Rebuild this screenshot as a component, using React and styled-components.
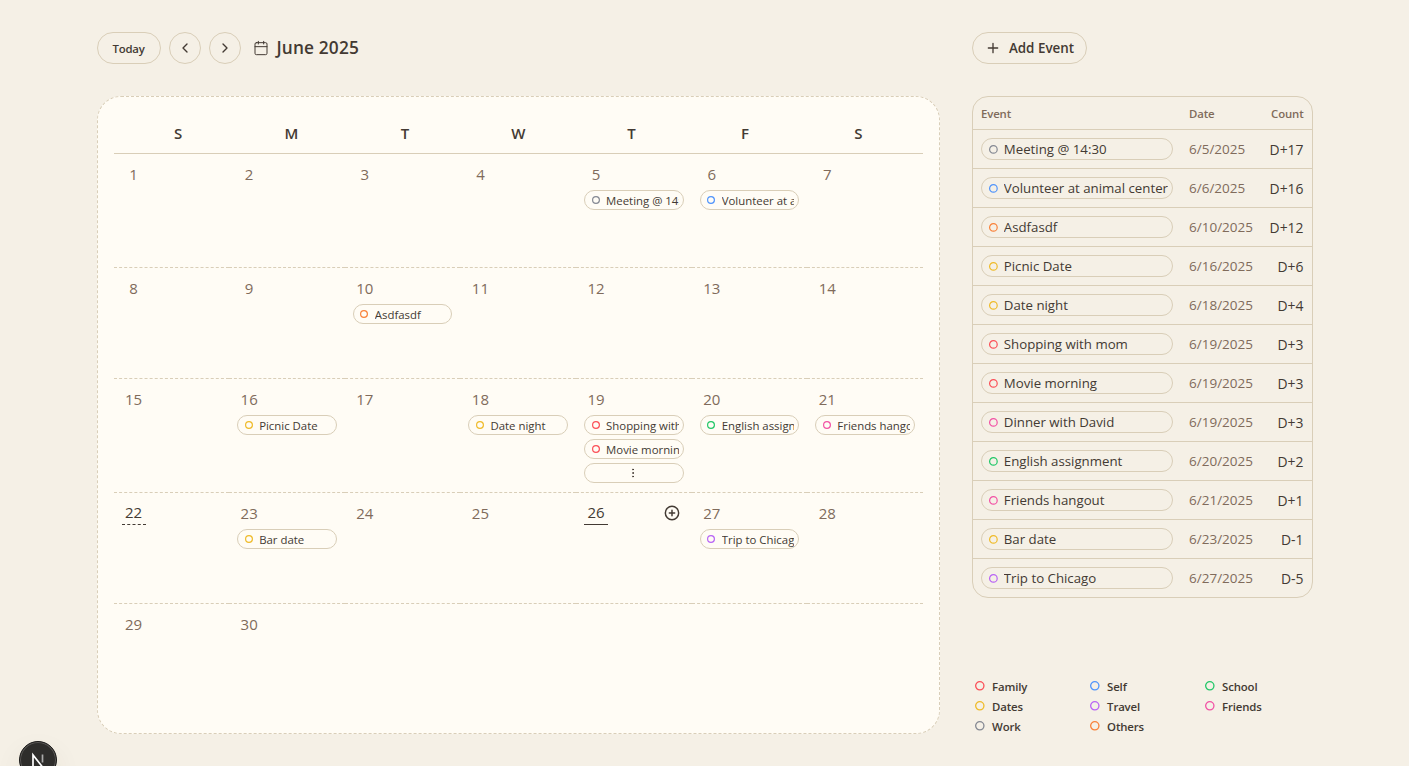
import React from "react";
import styled, { createGlobalStyle, css } from "styled-components";

const C = {
  page: "#f5f0e6",
  card: "#fffcf5",
  line: "#d9ceb8",
  ink: "#433a33",
  muted: "#806b5b",
};

const CATEGORY = {
  family: "#fb5058",
  self: "#5094fb",
  school: "#22c768",
  dates: "#efbb2a",
  travel: "#b863f5",
  friends: "#f252a5",
  work: "#858993",
  others: "#f9823a",
};

const Global = createGlobalStyle`
  *, *::before, *::after { box-sizing: border-box; }
  html, body { margin: 0; height: 766px; overflow: hidden; background: ${C.page}; }
  body { font-family: "Open Sans", "Noto Sans", sans-serif; color: ${C.ink}; }
  button { font: inherit; color: inherit; background: none; padding: 0; margin: 0; border: 0; }
`;

const Page = styled.main`
  width: 1216px;
  height: 766px;
  margin: 0 auto;
  padding-top: 32px;
  display: flex;
  gap: 32px;
`;

const MainColumn = styled.section`
  width: 843.5px;
  display: flex;
  flex-direction: column;
  gap: 32px;
`;

const SideColumn = styled.aside`
  width: 340.5px;
  height: 704px;
  display: flex;
  flex-direction: column;
`;

const Toolbar = styled.header`
  height: 32px;
  flex: none;
  display: flex;
  align-items: center;
  gap: 8px;
`;

const SideToolbar = styled(Toolbar)`
  margin-bottom: 32px;
`;

const OutlineButton = styled.button`
  height: 32px;
  width: ${(p) => p.$width}px;
  display: flex;
  align-items: center;
  justify-content: center;
  gap: 8px;
  border: 1px solid ${C.line};
  border-radius: 16px;
  font-size: ${(p) => p.$size || 12}px;
  letter-spacing: ${(p) => p.$spacing || 0}px;
  font-weight: 600;
  white-space: nowrap;
`;

const Title = styled.h1`
  margin: 0 0 0 4px;
  display: flex;
  align-items: center;
  gap: 8px;
  font-size: 17.3px;
  line-height: 28px;
  font-weight: 600;
  letter-spacing: 0.15px;
`;

const Calendar = styled.div`
  height: 638px;
  padding: 15px 16px 16px;
  display: flex;
  flex-direction: column;
  background: ${C.card};
  border: 1px dashed ${C.line};
  border-radius: 24px;
`;

const WeekHeader = styled.div`
  height: 42px;
  flex: none;
  padding: 0 8px;
  display: grid;
  grid-template-columns: repeat(7, 1fr);
  align-items: center;
  text-align: center;
  border-bottom: 1px solid ${C.line};
  font-size: 15px;
  line-height: 40px;
  font-weight: 600;
`;

const Grid = styled.div`
  flex: 1;
  display: grid;
  grid-template-columns: repeat(7, minmax(0, 1fr));
  grid-template-rows: 114px 111px 114px 111px 1fr;
`;

const Cell = styled.div`
  padding: 8px 8px 0;
  display: flex;
  flex-direction: column;
  gap: 4px;
  border-bottom: ${(p) => (p.$last ? "0" : `1px dashed ${C.line}`)};
`;

const CellTop = styled.div`
  height: 24px;
  display: flex;
  justify-content: space-between;
  align-items: flex-start;
`;

const DayNumber = styled.span`
  width: 24px;
  height: 24px;
  line-height: 25px;
  text-align: center;
  font-size: 15px;
  color: ${C.muted};
  ${(p) =>
    p.$mark &&
    css`
      color: ${C.ink};
      line-height: 23px;
      border-bottom: 1px ${p.$mark} ${C.ink};
    `}
`;

const AddMark = styled.span`
  height: 24px;
  padding-right: 4px;
  display: flex;
  align-items: center;
`;

const Pill = styled.div`
  height: ${(p) => (p.$large ? 22 : 20)}px;
  padding: 0 4px 0 5.5px;
  display: flex;
  align-items: center;
  gap: 5.5px;
  border: 1px solid ${C.line};
  border-radius: 11px;
`;

const MorePill = styled(Pill)`
  padding: 0 1px 0 0;
  justify-content: center;
`;

const PillText = styled.span`
  flex: 1;
  min-width: 0;
  overflow: hidden;
  white-space: nowrap;
  font-size: ${(p) => (p.$large ? 13.25 : 11.4)}px;
  line-height: 18px;
  padding-top: ${(p) => (p.$large ? 0 : 1)}px;
`;

const Table = styled.div`
  border: 1px solid ${C.line};
  border-radius: 16px;
`;

const Row = styled.div`
  height: 39px;
  padding: 0 8px;
  display: grid;
  grid-template-columns: 192px 1fr auto;
  column-gap: 16px;
  align-items: center;
  border-bottom: 1px solid ${C.line};
  font-size: 13.9px;
  &:last-child { height: 38px; border-bottom: 0; }
`;

const HeadRow = styled(Row)`
  height: 33px;
  font-size: 11.4px;
  font-weight: 600;
  letter-spacing: -0.15px;
  color: ${C.muted};
`;

const DateText = styled.span`
  font-size: 13.5px;
  color: ${C.muted};
`;

const Legend = styled.div`
  margin-top: auto;
  padding-left: 2px;
  display: grid;
  grid-template-columns: repeat(3, 115px);
  grid-auto-rows: 20px;
  font-size: 11.4px;
  font-weight: 600;
  letter-spacing: -0.15px;
`;

const LegendItem = styled.div`
  display: flex;
  align-items: center;
  gap: 6.5px;
`;

const DevBadge = styled.div`
  position: fixed;
  left: 19px;
  top: 741px;
  width: 38px;
  height: 38px;
  display: flex;
  align-items: center;
  justify-content: center;
  border-radius: 50%;
  background: #2e2d2b;
  border: 1px solid #1b1a19;
  box-shadow: inset 0 0 0 1px #5a5856, 0 12px 28px rgba(80, 70, 40, 0.08);
`;

const RingSvg = styled.svg`
  flex: none;
`;

const Ring = ({ color, size, stroke = 1.2 }) => (
  <RingSvg width={size + 2} height={size + 2} viewBox={`0 0 ${size + 2} ${size + 2}`}>
    <circle cx={size / 2 + 1} cy={size / 2 + 1} r={(size - stroke) / 2} fill="none" stroke={color} strokeWidth={stroke} />
  </RingSvg>
);

const Icon = ({ size, width = 2, children }) => (
  <svg width={size} height={size} viewBox="0 0 24 24" fill="none" stroke={C.ink} strokeWidth={width} strokeLinecap="round" strokeLinejoin="round">
    {children}
  </svg>
);

const EVENTS = [
  ["Meeting @ 14:30", "work", 5, "D+17"],
  ["Volunteer at animal center", "self", 6, "D+16"],
  ["Asdfasdf", "others", 10, "D+12"],
  ["Picnic Date", "dates", 16, "D+6"],
  ["Date night", "dates", 18, "D+4"],
  ["Shopping with mom", "family", 19, "D+3"],
  ["Movie morning", "family", 19, "D+3"],
  ["Dinner with David", "friends", 19, "D+3"],
  ["English assignment", "school", 20, "D+2"],
  ["Friends hangout", "friends", 21, "D+1"],
  ["Bar date", "dates", 23, "D-1"],
  ["Trip to Chicago", "travel", 27, "D-5"],
];

const LEGEND = [
  ["Family", "family"], ["Self", "self"], ["School", "school"],
  ["Dates", "dates"], ["Travel", "travel"], ["Friends", "friends"],
  ["Work", "work"], ["Others", "others"],
];

const MARKS = { 22: "dashed", 26: "solid" };

const EventPill = ({ event, large }) => (
  <Pill $large={large}>
    <Ring color={CATEGORY[event[1]]} size={large ? 8.8 : 8} />
    <PillText $large={large}>{event[0]}</PillText>
  </Pill>
);

const Day = ({ index }) => {
  const day = index + 1;
  const events = EVENTS.filter((e) => e[2] === day);
  return (
    <Cell $last={index >= 28}>
      {day <= 30 && (
        <CellTop>
          <DayNumber $mark={MARKS[day]}>{day}</DayNumber>
          {day === 26 && (
            <AddMark>
              <Icon size={16} width={2.2}>
                <circle cx="12" cy="12" r="10" />
                <path d="M8 12h8M12 8v8" />
              </Icon>
            </AddMark>
          )}
        </CellTop>
      )}
      {events.slice(0, 2).map((e) => <EventPill key={e[0]} event={e} />)}
      {events.length > 2 && (
        <MorePill>
          <Icon size={12}>
            <circle cx="12" cy="5" r="1" />
            <circle cx="12" cy="12" r="1" />
            <circle cx="12" cy="19" r="1" />
          </Icon>
        </MorePill>
      )}
    </Cell>
  );
};

export default function App() {
  return (
    <>
      <Global />
      <Page>
        <MainColumn>
          <Toolbar>
            <OutlineButton $width={64} $size={11.4} $spacing={-0.2}>Today</OutlineButton>
            <OutlineButton $width={32} aria-label="Previous month">
              <Icon size={16}><path d="m15 18-6-6 6-6" /></Icon>
            </OutlineButton>
            <OutlineButton $width={32} aria-label="Next month">
              <Icon size={16}><path d="m9 18 6-6-6-6" /></Icon>
            </OutlineButton>
            <Title>
              <Icon size={16} width={1.5}>
                <path d="M8 2v4M16 2v4M3 10h18" />
                <rect x="3" y="4" width="18" height="18" rx="2" />
              </Icon>
              June 2025
            </Title>
          </Toolbar>
          <Calendar>
            <WeekHeader>
              {["S", "M", "T", "W", "T", "F", "S"].map((d, i) => <span key={i}>{d}</span>)}
            </WeekHeader>
            <Grid>
              {Array.from({ length: 35 }, (_, i) => <Day key={i} index={i} />)}
            </Grid>
          </Calendar>
        </MainColumn>
        <SideColumn>
          <SideToolbar>
            <OutlineButton $width={115} $size={13.4}>
              <Icon size={16} width={2}><path d="M5 12h14M12 5v14" /></Icon>
              Add Event
            </OutlineButton>
          </SideToolbar>
          <Table>
            <HeadRow>
              <span>Event</span>
              <span>Date</span>
              <span>Count</span>
            </HeadRow>
            {EVENTS.map((e) => (
              <Row key={e[0]}>
                <EventPill event={e} large />
                <DateText>6/{e[2]}/2025</DateText>
                <span>{e[3]}</span>
              </Row>
            ))}
          </Table>
          <Legend>
            {LEGEND.map(([name, key]) => (
              <LegendItem key={key}>
                <Ring color={CATEGORY[key]} size={9.6} stroke={1.3} />
                {name}
              </LegendItem>
            ))}
          </Legend>
        </SideColumn>
      </Page>
      <DevBadge>
        <svg width="16" height="16" viewBox="0 0 16 16" fill="none" stroke="#fff" strokeWidth="1.7">
          <path d="M3 14V3l9.5 12" />
          <path d="M12.5 2.5v8" stroke="#aaa" />
        </svg>
      </DevBadge>
    </>
  );
}
